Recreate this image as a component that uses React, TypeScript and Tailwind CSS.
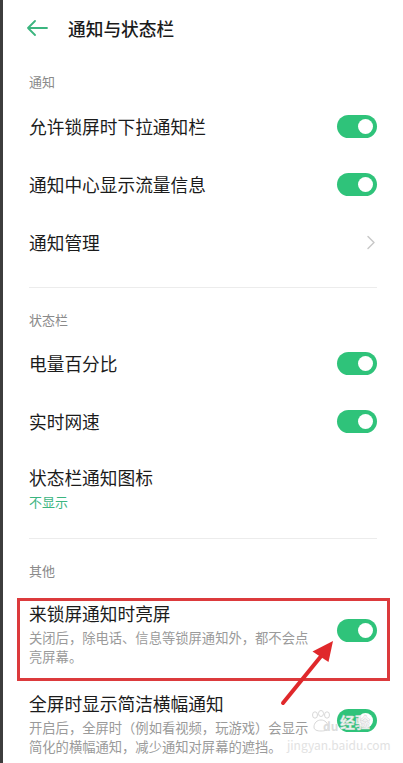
import React from "react";

const font = "font-['Noto_Sans_CJK_SC','Noto_Sans',sans-serif]";

function Toggle({ className = "" }: { className?: string }) {
  return (
    <div className={`relative h-[23px] w-[40px] shrink-0 rounded-full bg-[#2fc37a] ${className}`}>
      <div className="absolute right-[4px] top-[4px] h-[15px] w-[15px] rounded-full bg-white" />
    </div>
  );
}

function SectionLabel({ text, top }: { text: string; top: string }) {
  return (
    <div className={`${top} pb-[4px] text-[13px] leading-[20px] text-[#8a8a8a]`}>{text}</div>
  );
}

function SwitchRow({ title }: { title: string }) {
  return (
    <div className="flex h-[58px] items-center justify-between">
      <span className="text-[17.7px] leading-[24px] text-[#1b1b1b]">{title}</span>
      <Toggle />
    </div>
  );
}

function DescRow({ title, desc, pt, pb }: { title: string; desc: string; pt: string; pb: string }) {
  return (
    <div className={`flex items-center justify-between ${pt} ${pb}`}>
      <div className="w-[288px]">
        <div className="text-[17.7px] leading-[24px] text-[#1b1b1b]">{title}</div>
        <div className="mt-[3px] text-[13.3px] leading-[19px] text-[#9a9a9a]">
          <span>{desc}</span>
        </div>
      </div>
      <Toggle className="-mt-[6px]" />
    </div>
  );
}

export default function App() {
  return (
    <div className={`flex h-[763px] w-[403px] overflow-hidden bg-white ${font}`}>
      <div className="w-[3px] shrink-0 bg-[#3d3d3d]" />
      <div className="relative flex-1 pl-[26px] pr-[26px]">
        {/* header */}
        <div className="flex h-[56px] items-center">
          <svg width="22" height="16" viewBox="0 0 22 16" className="-ml-[3px]" fill="none" stroke="#3bb57f" strokeWidth="1.8" strokeLinecap="round" strokeLinejoin="round">
            <path d="M2 8h19M9 1L2 8l7 7" />
          </svg>
          <span className="ml-[20px] text-[17.7px] font-medium leading-[24px] text-[#1b1b1b]">通知与状态栏</span>
        </div>

        <SectionLabel text="通知" top="pt-[16px] pb-[5px]" />
        <SwitchRow title="允许锁屏时下拉通知栏" />
        <SwitchRow title="通知中心显示流量信息" />
        <div className="flex h-[58px] items-center justify-between">
          <span className="text-[17.7px] leading-[24px] text-[#1b1b1b]">通知管理</span>
          <svg width="10" height="15" viewBox="0 0 10 15" fill="none" stroke="#c9c9c9" strokeWidth="1.5" strokeLinecap="round" strokeLinejoin="round" className="mr-[1px]">
            <path d="M2 1.5l6 6-6 6" />
          </svg>
        </div>
        <div className="mt-[16px] h-px bg-[#ececec]" />

        <SectionLabel text="状态栏" top="pt-[22px]" />
        <SwitchRow title="电量百分比" />
        <SwitchRow title="实时网速" />
        <div className="pb-[26px] pt-[15px]">
          <div className="text-[17.7px] leading-[24px] text-[#1b1b1b]">状态栏通知图标</div>
          <div className="mt-[3px] text-[13px] leading-[20px] text-[#3bb57f]">不显示</div>
        </div>
        <div className="h-px bg-[#ececec]" />

        <SectionLabel text="其他" top="pt-[22px]" />
        <div className="relative">
          <DescRow
            title="来锁屏通知时亮屏"
            desc="关闭后，除电话、信息等锁屏通知外，都不会点亮屏幕。"
            pt="pt-[16px]"
            pb="pb-[14px]"
          />
          <div className="pointer-events-none absolute -bottom-[1px] -left-[12px] -right-[13px] top-[13px] border-[3px] border-[#dc3a3c]" />
        </div>
        <DescRow
          title="全屏时显示简洁横幅通知"
          desc="开启后，全屏时（例如看视频，玩游戏）会显示简化的横幅通知，减少通知对屏幕的遮挡。"
          pt="pt-[11px]"
          pb="pb-[8px]"
        />

        {/* watermark */}
        <svg className="pointer-events-none absolute left-[307px] top-[710px]" width="22" height="22" viewBox="0 0 22 22" fill="none" stroke="#d8d8d8" strokeWidth="1">
          <ellipse cx="5" cy="5" rx="2.5" ry="3.2" />
          <ellipse cx="11" cy="3.5" rx="2.5" ry="3" />
          <ellipse cx="17" cy="5" rx="2.5" ry="3.2" />
          <path d="M4 17c0-4 3-7 7-7s7 3 7 7c0 3-3 4-7 4s-7-1-7-4z" />
        </svg>
        <div className="pointer-events-none absolute left-[320px] top-[718px] whitespace-nowrap text-[12px] font-bold leading-[16px] text-[#dcdcdc]">
          du
        </div>
        <div className="pointer-events-none absolute left-[337px] top-[712px] whitespace-nowrap text-[15px] font-bold leading-[20px] text-white/90 [-webkit-text-stroke:0.5px_#d4d4d4]">
          经验
        </div>
        <div className="pointer-events-none absolute left-[284px] top-[738px] whitespace-nowrap text-[12px] leading-[14px] text-[#e2e2e2]">
          jingyan.baidu.com
        </div>

        {/* annotation arrow */}
        <svg className="pointer-events-none absolute left-[-3px] top-0" width="403" height="763" viewBox="0 0 403 763">
          <line x1="283" y1="703" x2="322" y2="655" stroke="#e0282b" strokeWidth="4" strokeLinecap="round" />
          <polygon points="333,641 328.5,662 312.5,651.5" fill="#e0282b" />
        </svg>
      </div>
    </div>
  );
}
